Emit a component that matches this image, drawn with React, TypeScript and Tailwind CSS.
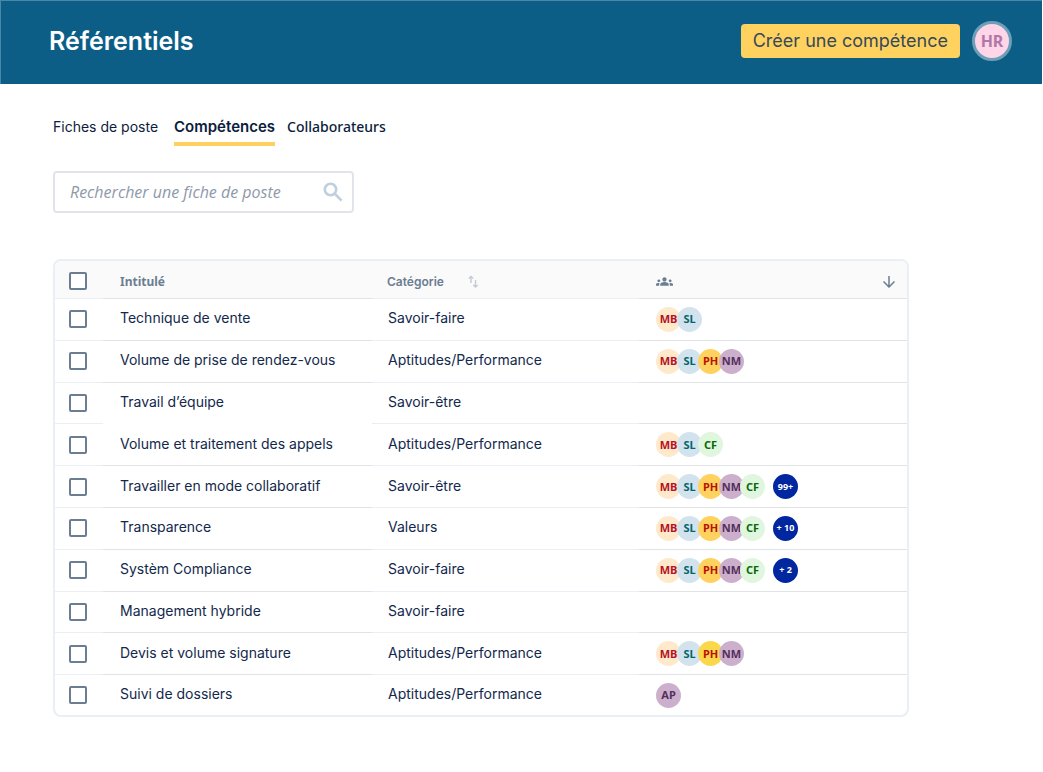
import React from "react";
import { MdGroups, MdArrowDownward } from "react-icons/md";

type Person = "MB" | "SL" | "PH" | "NM" | "CF" | "AP" | "PHY";

interface Skill {
  title: string;
  category: string;
  people: Person[];
  more?: string;
  openEnd?: boolean;
}

const AVATARS: Record<Person, { initials: string; tone: string }> = {
  MB: { initials: "MB", tone: "bg-[#feeacb] text-[#b51226]" },
  SL: { initials: "SL", tone: "bg-[#d2e3ee] text-[#04666c]" },
  PH: { initials: "PH", tone: "bg-[#ffd25f] text-[#b81202]" },
  PHY: { initials: "PH", tone: "bg-[#fbd74c] text-[#b81202]" },
  NM: { initials: "NM", tone: "bg-[#ccafcc] text-[#55305c]" },
  CF: { initials: "CF", tone: "bg-[#e0f6de] text-[#046a04]" },
  AP: { initials: "AP", tone: "bg-[#ccafcc] text-[#55305c]" },
};

const SKILLS: Skill[] = [
  { title: "Technique de vente", category: "Savoir-faire", people: ["MB", "SL"] },
  { title: "Volume de prise de rendez-vous", category: "Aptitudes/Performance", people: ["MB", "SL", "PH", "NM"] },
  { title: "Travail d’équipe", category: "Savoir-être", people: [], openEnd: true },
  { title: "Volume et traitement des appels", category: "Aptitudes/Performance", people: ["MB", "SL", "CF"] },
  { title: "Travailler en mode collaboratif", category: "Savoir-être", people: ["MB", "SL", "PH", "NM", "CF"], more: "99+" },
  { title: "Transparence", category: "Valeurs", people: ["MB", "SL", "PH", "NM", "CF"], more: "+ 10" },
  { title: "Systèm Compliance", category: "Savoir-faire", people: ["MB", "SL", "PH", "NM", "CF"], more: "+ 2" },
  { title: "Management hybride", category: "Savoir-faire", people: [] },
  { title: "Devis et volume signature", category: "Aptitudes/Performance", people: ["MB", "SL", "PHY", "NM"] },
  { title: "Suivi de dossiers", category: "Aptitudes/Performance", people: ["AP"] },
];

function Check({ label }: { label: string }) {
  return (
    <input
      type="checkbox"
      aria-label={label}
      className="block size-[18px] appearance-none rounded-[2px] border-2 border-[#6b7d92] bg-white checked:bg-[#6b7d92]"
    />
  );
}

function SearchIcon() {
  return (
    <svg className="size-6" viewBox="0 0 24 24" fill="none" stroke="#bfcfdd" strokeWidth="2.6" aria-hidden="true">
      <circle cx="9.5" cy="9.5" r="5.7" />
      <path d="M14 14l6.6 6.6" />
    </svg>
  );
}

function SortIcon() {
  return (
    <svg width="11" height="14" viewBox="0 0 11 14" fill="none" stroke="#c3cbd5" strokeWidth="1.4" aria-hidden="true">
      <path d="M3 8V1.5M.8 3.6 3 1.4l2.2 2.2M7.5 5v7M5.3 9.9l2.2 2.2 2.2-2.2" />
    </svg>
  );
}

export default function App() {
  return (
    <div className="min-h-screen bg-white font-['Inter',sans-serif] text-[#12284c]">
      <header className="mr-px flex h-[84px] items-center justify-between border-t border-l border-[#4a87a6] bg-[#0c5e87] pr-[30px] pb-1 pl-[48px]">
        <h1 className="pt-0.5 text-[25px] font-semibold text-white">Référentiels</h1>
        <div className="flex items-center gap-3">
          <button type="button" className="h-[34px] rounded-[4px] bg-[#ffd25f] px-3 text-lg leading-6 text-[#34495a]">
            Créer une compétence
          </button>
          <button type="button" className="flex size-10 items-center justify-center rounded-full border-[3px] border-[#6d9fb8] bg-[#ffd5e8] font-['Noto_Sans',sans-serif] text-base font-bold text-[#b078a6]">
            HR
          </button>
        </div>
      </header>

      <main className="px-[53px] pt-8">
        <nav className="flex items-start text-sm leading-[22px] text-[#0b1c3c]">
          <a href="#fiches">Fiches de poste</a>
          <a href="#competences" aria-current="page" className="ml-4 border-b-4 border-[#ffd25f] pb-1 text-[15px] leading-[22px] font-semibold">
            Compétences
          </a>
          <a href="#collaborateurs" className="ml-3 font-['Noto_Sans',sans-serif] font-medium">
            Collaborateurs
          </a>
        </nav>

        <label className="mt-[25px] flex h-[42px] w-full max-w-[301px] items-center rounded-[4px] border-2 border-[#e1e5eb] pr-[7px] pl-[15px]">
          <input
            type="text"
            aria-label="Rechercher une fiche de poste"
            placeholder="Rechercher une fiche de poste"
            className="min-w-0 flex-1 bg-transparent font-['Open_Sans',sans-serif] text-base italic outline-none placeholder:text-[#8e99a9]"
          />
          <SearchIcon />
        </label>

        <div className="mt-[46px] max-w-[856px] overflow-hidden rounded-lg border-2 border-[#e9eff4]">
          <table className="h-[454px] w-full table-fixed border-separate border-spacing-0 text-left">
            <colgroup>
              <col className="w-[48px]" />
              <col className="w-[269px]" />
              <col className="w-[267px]" />
              <col />
            </colgroup>
            <thead>
              <tr className="bg-[#fafafa] font-['Noto_Sans',sans-serif] text-xs leading-4 text-[#6b7d92]">
                <th className="h-[38px] border-b border-[#e9eff4] pt-0.5 pl-3.5">
                  <Check label="Tout sélectionner" />
                </th>
                <th className="border-b border-[#e0e4e9] pt-1 pl-[17px] font-bold">Intitulé</th>
                <th className="border-b border-[#e9eff4] pt-1 pl-[15px] font-['Inter',sans-serif] font-semibold">
                  <button type="button" className="flex items-center gap-6">
                    Catégorie
                    <SortIcon />
                  </button>
                </th>
                <th className="border-b border-[#e0e4e9] pt-1 pr-[9px] pl-[17px]">
                  <div className="flex items-center justify-between">
                    <MdGroups className="size-[17px]" role="img" aria-label="Collaborateurs" />
                    <button type="button" aria-label="Trier">
                      <MdArrowDownward className="size-[18px]" />
                    </button>
                  </div>
                </th>
              </tr>
            </thead>
            <tbody className="text-sm leading-5">
              {SKILLS.map((s) => (
                <tr key={s.title} className="group">
                  <td className="h-[41px] border-b border-[#e9eff4] pl-3.5 group-last:h-[39px] group-last:border-b-0">
                    <Check label={s.title} />
                  </td>
                  <td className={s.openEnd ? "pb-[3px] pl-[17px]" : "border-b border-[#e0e4e9] pb-0.5 pl-[17px] group-last:border-b-0"}>
                    {s.title}
                  </td>
                  <td className="border-b border-[#e9eff4] pb-0.5 pl-4 group-last:border-b-0">{s.category}</td>
                  <td className="border-b border-[#e0e4e9] pl-[17px] group-last:border-b-0">
                    <div className="flex items-center font-['Noto_Sans',sans-serif] font-bold">
                      {s.people.map((p) => (
                        <span
                          key={p}
                          className={`-mr-1 flex size-[25px] items-center justify-center rounded-full text-[11px] ${AVATARS[p].tone}`}
                        >
                          {AVATARS[p].initials}
                        </span>
                      ))}
                      {s.more && (
                        <span className="ml-3 flex size-[25px] items-center justify-center rounded-full bg-[#0027a0] text-[9px] text-white">
                          {s.more}
                        </span>
                      )}
                    </div>
                  </td>
                </tr>
              ))}
            </tbody>
          </table>
        </div>
      </main>
    </div>
  );
}
